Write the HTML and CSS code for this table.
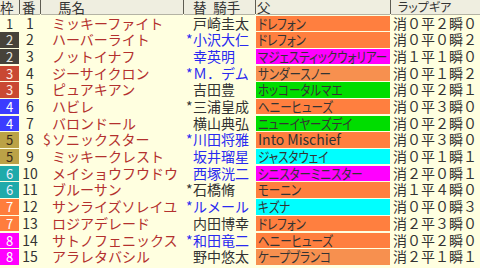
FILE: index.html
```html
<!DOCTYPE html>
<html lang="ja">
<head>
<meta charset="utf-8">
<title>出馬表</title>
<link rel="stylesheet" href="styles.css">
</head>
<body>
<div class="race">
  <div class="hd hd-waku">枠</div>
  <div class="hd hd-ban">番</div>
  <div class="hd hd-name">馬名</div>
  <div class="hd hd-jockey">替&ensp;騎手</div>
  <div class="hd hd-sire">父</div>
  <div class="hd hd-lap">ラップギア</div>

  <div class="waku w1">1</div><div class="ban">1</div><div class="name"><span class="mk"></span>ミッキーファイト</div><div class="jockey"><span class="mk"></span>戸崎圭太</div><div class="sire s-or"><span class="kana">ドレフォン</span></div><div class="lap">消０平２瞬０</div>
  <div class="waku w2">2</div><div class="ban">2</div><div class="name"><span class="mk"></span>ハーバーライト</div><div class="jockey blue"><span class="mk">*</span>小沢大仁</div><div class="sire s-or"><span class="kana">ドレフォン</span></div><div class="lap">消０平０瞬２</div>
  <div class="waku w2">2</div><div class="ban">3</div><div class="name"><span class="mk"></span>ノットイナフ</div><div class="jockey blue"><span class="mk"></span>幸英明</div><div class="sire s-mg"><span class="kana">マジェスティックウォリアー</span></div><div class="lap">消１平１瞬０</div>
  <div class="waku w3">3</div><div class="ban">4</div><div class="name"><span class="mk"></span>ジーサイクロン</div><div class="jockey blue"><span class="mk">*</span>Ｍ．デム</div><div class="sire s-lo"><span class="kana">サンダースノー</span></div><div class="lap">消０平１瞬２</div>
  <div class="waku w3">3</div><div class="ban">5</div><div class="name"><span class="mk"></span>ピュアキアン</div><div class="jockey"><span class="mk"></span>吉田豊</div><div class="sire s-gr"><span class="kana">ホッコータルマエ</span></div><div class="lap">消０平２瞬１</div>
  <div class="waku w4">4</div><div class="ban">6</div><div class="name"><span class="mk"></span>ハビレ</div><div class="jockey"><span class="mk">*</span>三浦皇成</div><div class="sire s-or"><span class="kana">ヘニーヒューズ</span></div><div class="lap">消０平３瞬０</div>
  <div class="waku w4">4</div><div class="ban">7</div><div class="name"><span class="mk"></span>バロンドール</div><div class="jockey"><span class="mk"></span>横山典弘</div><div class="sire s-gr"><span class="kana">ニューイヤーズデイ</span></div><div class="lap">消０平２瞬０</div>
  <div class="waku w5">5</div><div class="ban">8</div><div class="name"><span class="mk">$</span>ソニックスター</div><div class="jockey blue"><span class="mk">*</span>川田将雅</div><div class="sire s-or"><span class="latin">Into Mischief</span></div><div class="lap">消０平３瞬０</div>
  <div class="waku w5">5</div><div class="ban">9</div><div class="name"><span class="mk"></span>ミッキークレスト</div><div class="jockey blue"><span class="mk"></span>坂井瑠星</div><div class="sire s-cy"><span class="kana">ジャスタウェイ</span></div><div class="lap">消０平１瞬１</div>
  <div class="waku w6">6</div><div class="ban">10</div><div class="name"><span class="mk"></span>メイショウフウドウ</div><div class="jockey blue"><span class="mk"></span>西塚洸二</div><div class="sire s-mg"><span class="kana">シニスターミニスター</span></div><div class="lap">消２平０瞬１</div>
  <div class="waku w6">6</div><div class="ban">11</div><div class="name"><span class="mk"></span>ブルーサン</div><div class="jockey"><span class="mk">*</span>石橋脩</div><div class="sire s-or"><span class="kana">モーニン</span></div><div class="lap">消１平４瞬０</div>
  <div class="waku w7">7</div><div class="ban">12</div><div class="name"><span class="mk"></span>サンライズソレイユ</div><div class="jockey blue"><span class="mk">*</span>ルメール</div><div class="sire s-cy"><span class="kana">キズナ</span></div><div class="lap">消０平０瞬３</div>
  <div class="waku w7">7</div><div class="ban">13</div><div class="name"><span class="mk"></span>ロジアデレード</div><div class="jockey"><span class="mk"></span>内田博幸</div><div class="sire s-or"><span class="kana">ドレフォン</span></div><div class="lap">消２平３瞬０</div>
  <div class="waku w8">8</div><div class="ban">14</div><div class="name"><span class="mk"></span>サトノフェニックス</div><div class="jockey blue"><span class="mk">*</span>和田竜二</div><div class="sire s-or"><span class="kana">ヘニーヒューズ</span></div><div class="lap">消０平２瞬０</div>
  <div class="waku w8">8</div><div class="ban">15</div><div class="name"><span class="mk"></span>アラレタバシル</div><div class="jockey"><span class="mk"></span>野中悠太</div><div class="sire s-lo"><span class="kana">ケープブランコ</span></div><div class="lap">消２平１瞬１</div>
</div>
</body>
</html>
```

FILE: styles.css
```css
html, body {
  margin: 0;
  padding: 0;
  background: #ffffe0;
}

body {
  width: 480px;
  height: 268px;
  overflow: hidden;
  font-family: "Noto Sans CJK JP", sans-serif;
  color: #333;
}

.race {
  display: grid;
  grid-template-columns: 19px 20px 142px 71px 134px 89px;
  grid-template-rows: 14.3px;
  grid-auto-rows: 15.4px;
  column-gap: 1px;
  row-gap: 1.3px;
  background: #ffffe0;
}

.race > div {
  font-size: 14px;
  line-height: 15.4px;
  white-space: nowrap;
  overflow: hidden;
}

/* header */
.race > .hd {
  background: #efeee0;
  line-height: 14.3px;
  font-size: 13.5px;
  color: #333;
  overflow: visible;
  box-shadow: 1px 0 0 #5e5c52, 0 1px 0 #b4b3a4;
}

.hd-waku { padding-left: 0; }
.hd-ban { padding-left: 2px; }
.hd-name { padding-left: 17px; }
.hd-jockey { padding-left: 9px; }
.hd-sire { padding-left: 1px; }
.race > .hd-lap {
  padding-left: 7px;
  font-size: 12px;
  font-feature-settings: "palt";
  box-shadow: 0 1px 0 #b4b3a4;
}

/* frame number */
.race > .waku {
  text-align: center;
  font-size: 13px;
  color: #fff;
}
.w1 { background: #ffffe0; color: #333 !important; }
.w2 { background: #46423a; color: #e8e8e0 !important; }
.w3 { background: #c94832; color: #ffe8e0 !important; }
.w4 { background: #3c3cff; }
.w5 { background: #bba247; color: #3a2a18 !important; }
.w6 { background: #1faaaa; color: #eef !important; }
.w7 { background: #ff7d3c; }
.w8 { background: #ff00ff; }

.ban {
  text-align: center;
  color: #333;
}

.name {
  display: flex;
  padding-left: 2px;
  color: #b3302e;
}

.mk {
  flex: none;
  width: 9px;
}

.jockey {
  display: flex;
  padding-left: 2px;
  color: #333;
}
.jockey .mk { width: 7px; }
.jockey.blue { color: #2a2af0; }

.race > .sire {
  padding-left: 2px;
  font-size: 14px;
  color: #333;
}
.sire .kana {
  display: inline-block;
  font-feature-settings: "palt";
  transform: scaleX(0.82);
  transform-origin: left center;
}
.sire .latin {
  display: inline-block;
}
.s-or { background: #ff7f3f; }
.s-lo { background: #f7904f; }
.s-mg { background: #ff00ff; }
.s-gr { background: #00dd00; }
.s-cy { background: #00ffff; }

.lap {
  padding-left: 2px;
  color: #333;
}
```
